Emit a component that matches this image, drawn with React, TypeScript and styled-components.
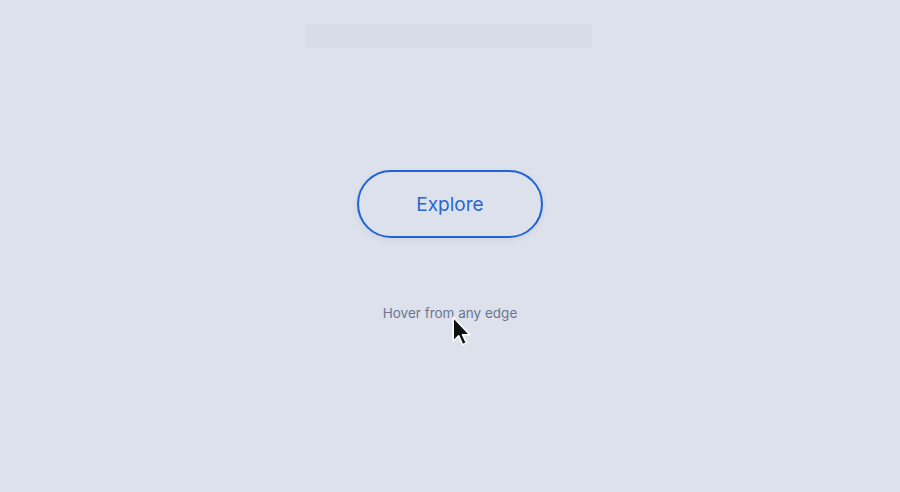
import styled, { createGlobalStyle } from "styled-components";

const GlobalStyle = createGlobalStyle`
  html, body {
    margin: 0;
    padding: 0;
    background: #dce1ec;
    font-family: Inter, "Noto Sans", sans-serif;
  }
`;

const Page = styled.div`
  position: relative;
  width: 900px;
  height: 492px;
  display: flex;
  flex-direction: column;
  align-items: center;
  padding-top: 24px;
  box-sizing: border-box;
  overflow: hidden;
`;

const TopBar = styled.div`
  width: 286px;
  height: 24px;
  margin-left: -3px;
  background: #d7dce7;
  border-radius: 2px;
`;

const ExploreButton = styled.button`
  margin-top: 122px;
  width: 186px;
  height: 68px;
  border: 2.5px solid #1f63d6;
  border-radius: 34px;
  background: transparent;
  color: #2a67cc;
  font-family: Inter, "Noto Sans", sans-serif;
  font-size: 19px;
  font-weight: 400;
  cursor: pointer;
  box-shadow: 0 2px 6px rgba(60, 80, 120, 0.08);
`;

const Caption = styled.p`
  margin: 67px 0 0;
  font-size: 13.5px;
  line-height: 16px;
  color: #6c7590;
`;

const Cursor = styled.svg`
  position: absolute;
  left: 451px;
  top: 316px;
  width: 22px;
  height: 33px;
`;

export default function App() {
  return (
    <Page>
      <GlobalStyle />
      <TopBar />
      <ExploreButton>Explore</ExploreButton>
      <Caption>Hover from any edge</Caption>
      <Cursor viewBox="0 0 20 30">
        <path
          d="M2 1 L2 23 L7 18 L10.5 26 L14 24.5 L10.5 17 L17 17 Z"
          fill="#111"
          stroke="#fff"
          strokeWidth="1.4"
          strokeLinejoin="round"
        />
      </Cursor>
    </Page>
  );
}
